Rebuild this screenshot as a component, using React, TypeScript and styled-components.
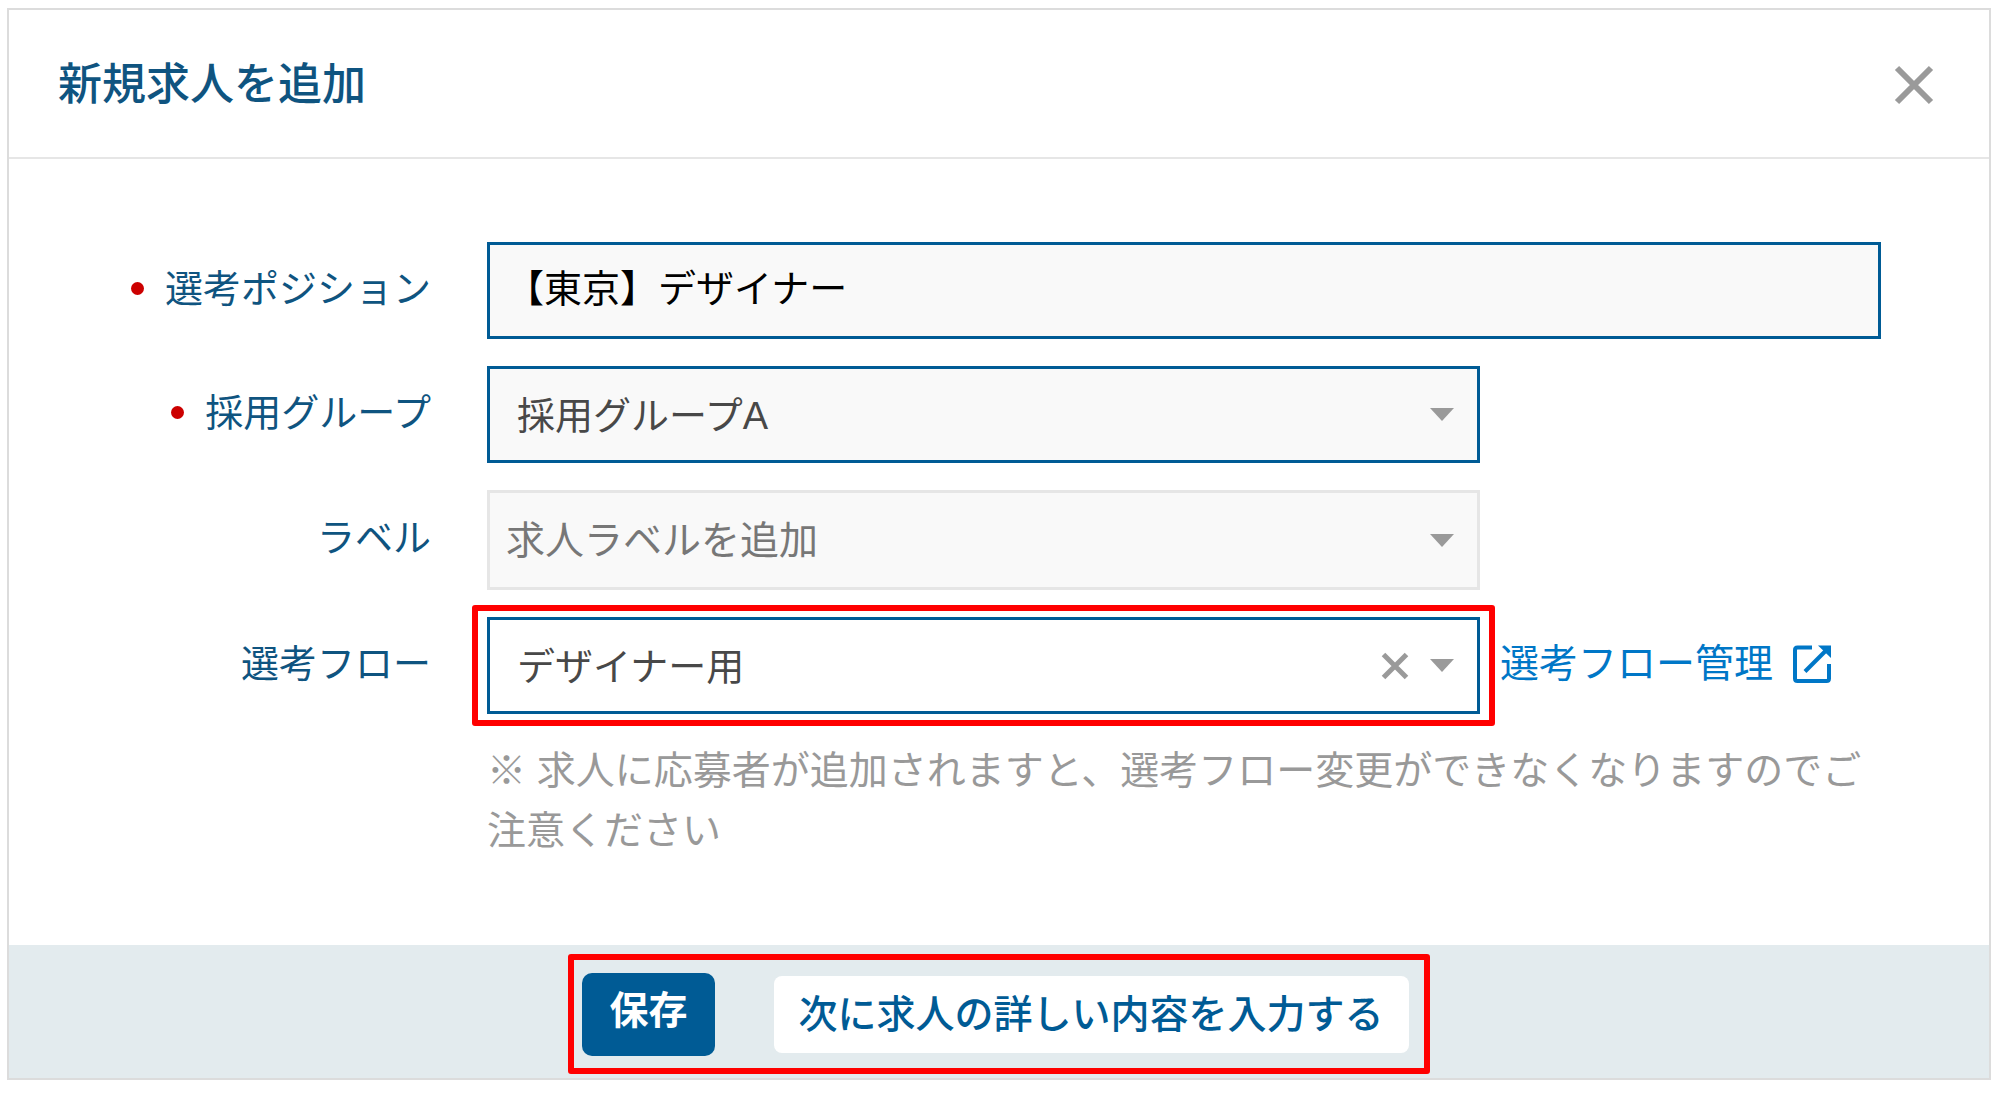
import React from "react";
import styled, { createGlobalStyle, css } from "styled-components";

const color = {
  title: "#0f5480",
  primary: "#005b95",
  link: "#0077c7",
  line: "#dcdcdc",
  softLine: "#e6e6e6",
  field: "#f9f9f9",
  icon: "#9a9a9a",
  required: "#cc0000",
  callout: "#ff0000",
};

const GlobalStyle = createGlobalStyle`
  *, *::before, *::after { box-sizing: border-box; }
  body {
    margin: 0;
    background: #fff;
    font-family: "Liberation Sans", "Noto Sans CJK JP", sans-serif;
    font-size: 39px;
    line-height: 60px;
  }
  button, input, select { font: inherit; margin: 0; }
`;

const Page = styled.div`
  padding: 8px 9px 14px 7px;
`;

const Dialog = styled.form`
  display: flex;
  flex-direction: column;
  border: 2px solid ${color.line};
  background: #fff;
`;

const Header = styled.header`
  display: flex;
  align-items: center;
  justify-content: space-between;
  padding: 45px 55px 42px 49px;
  border-bottom: 2px solid ${color.softLine};
`;

const Title = styled.h1`
  margin: 0;
  color: ${color.title};
  font-size: 44px;
  font-weight: 500;
  line-height: 60px;
`;

const IconButton = styled.button`
  display: flex;
  padding: 0;
  border: 0;
  background: none;
  color: ${color.icon};
  cursor: pointer;
`;

const Body = styled.div`
  display: flex;
  flex-direction: column;
  gap: 27px;
  padding: 83px 108px 84px 0;
`;

const Row = styled.div`
  display: grid;
  grid-template-columns: 422px minmax(0, 1fr);
  column-gap: 56px;
  align-items: center;
`;

const Label = styled.label`
  display: flex;
  align-items: center;
  justify-content: flex-end;
  gap: 21px;
  padding-bottom: 4px;
  color: ${color.title};
  font-size: 38px;
  white-space: nowrap;
`;

const RequiredDot = styled.span`
  width: 13px;
  height: 13px;
  border-radius: 50%;
  background: ${color.required};
`;

const fieldBox = css`
  display: block;
  width: 100%;
  height: 97px;
  border: 3px solid ${color.primary};
  border-radius: 0;
  background: ${color.field};
  font-size: 38px;
  outline: none;
`;

const TextInput = styled.input`
  ${fieldBox}
  padding: 0 16px 10px;
  color: #000;
`;

const FieldLine = styled.div`
  display: flex;
  align-items: center;
  gap: 20px;
`;

const SelectWrap = styled.div`
  position: relative;
  flex: 0 1 993px;
  min-width: 0;
`;

const Select = styled.select<{ $empty?: boolean; $active?: boolean }>`
  ${fieldBox}
  appearance: none;
  padding: 2px 100px 0 27px;
  color: #484848;
  ${(p) =>
    p.$empty &&
    css`
      height: 100px;
      padding-left: 16px;
      border-color: ${color.softLine};
      color: #777;
      font-size: 39px;
    `}
  ${(p) =>
    p.$active &&
    css`
      background: #fff;
    `}
`;

const SelectIcons = styled.div`
  position: absolute;
  inset: 0 26px 0 auto;
  display: flex;
  align-items: center;
  gap: 21px;
  color: ${color.icon};
  pointer-events: none;

  button { pointer-events: auto; }
`;

const Callout = styled.span`
  position: absolute;
  inset: -12px -15px;
  border: 6px solid ${color.callout};
  border-radius: 3px;
  pointer-events: none;
`;

const FlowLink = styled.a`
  display: flex;
  align-items: center;
  gap: 20px;
  padding-bottom: 4px;
  color: ${color.link};
  text-decoration: none;
  white-space: nowrap;
`;

const Note = styled.p`
  grid-column: 2;
  margin: 0;
  color: #999;
`;

const Footer = styled.footer`
  display: flex;
  justify-content: center;
  padding: 9px 0 4px;
  background: #e3ebee;
`;

const Actions = styled.div`
  display: flex;
  align-items: center;
  gap: 59px;
  padding: 13px 15px 12px 8px;
  border: 6px solid ${color.callout};
  border-radius: 3px;
`;

const Button = styled.button<{ $primary?: boolean }>`
  padding: 9px 25px 8px;
  border: 0;
  border-radius: 8px;
  background: ${(p) => (p.$primary ? color.primary : "#fff")};
  color: ${(p) => (p.$primary ? "#fff" : color.primary)};
  font-weight: 500;
  white-space: nowrap;
  cursor: pointer;
  ${(p) =>
    p.$primary &&
    css`
      padding: 8px 27px 15px;
      border-radius: 10px;
      font-weight: 700;
    `}
`;

function Cross({ size, stroke }: { size: number; stroke: number }) {
  const a = stroke / 2;
  const b = size - a;
  return (
    <svg width={size} height={size} viewBox={`0 0 ${size} ${size}`} aria-hidden="true">
      <path d={`M${a} ${a}L${b} ${b}M${b} ${a}L${a} ${b}`} stroke="currentColor" strokeWidth={stroke} />
    </svg>
  );
}

function Caret() {
  return (
    <svg width="24" height="13" viewBox="0 0 24 13" aria-hidden="true">
      <path d="M0 0h24L12 13z" fill="currentColor" />
    </svg>
  );
}

function OpenIcon() {
  return (
    <svg width="38" height="38" viewBox="0 0 38 38" fill="none" stroke="currentColor" strokeWidth="4" aria-hidden="true">
      <path d="M19 2.5H4.500Q2 2.500 2 5V33.500Q2 36 4.500 36H33.500Q36 36 36 33.500V19" />
      <path d="M12 26.500L34 4.500" />
      <path d="M25 .5H38V13z" fill="currentColor" stroke="none" />
    </svg>
  );
}

export default function App() {
  return (
    <>
      <GlobalStyle />
      <Page>
        <Dialog role="dialog" aria-labelledby="dialog-title" onSubmit={(e) => e.preventDefault()}>
          <Header>
            <Title id="dialog-title">新規求人を追加</Title>
            <IconButton type="button" aria-label="閉じる">
              <Cross size={40} stroke={6} />
            </IconButton>
          </Header>

          <Body>
            <Row>
              <Label htmlFor="position">
                <RequiredDot />
                選考ポジション
              </Label>
              <TextInput id="position" type="text" defaultValue="【東京】デザイナー" />
            </Row>

            <Row>
              <Label htmlFor="group">
                <RequiredDot />
                採用グループ
              </Label>
              <FieldLine>
                <SelectWrap>
                  <Select id="group">
                    <option>採用グループA</option>
                  </Select>
                  <SelectIcons>
                    <Caret />
                  </SelectIcons>
                </SelectWrap>
              </FieldLine>
            </Row>

            <Row>
              <Label htmlFor="tag">ラベル</Label>
              <FieldLine>
                <SelectWrap>
                  <Select id="tag" $empty>
                    <option>求人ラベルを追加</option>
                  </Select>
                  <SelectIcons>
                    <Caret />
                  </SelectIcons>
                </SelectWrap>
              </FieldLine>
            </Row>

            <Row>
              <Label htmlFor="flow">選考フロー</Label>
              <FieldLine>
                <SelectWrap>
                  <Select id="flow" $active>
                    <option>デザイナー用</option>
                  </Select>
                  <SelectIcons>
                    <IconButton type="button" aria-label="クリア">
                      <Cross size={28} stroke={5} />
                    </IconButton>
                    <Caret />
                  </SelectIcons>
                  <Callout />
                </SelectWrap>
                <FlowLink href="#flow">
                  選考フロー管理
                  <OpenIcon />
                </FlowLink>
              </FieldLine>
            </Row>

            <Row>
              <Note>
                ※ 求人に応募者が追加されますと、選考フロー変更ができなくなりますのでご注意ください
              </Note>
            </Row>
          </Body>

          <Footer>
            <Actions>
              <Button type="submit" $primary>
                保存
              </Button>
              <Button type="button">次に求人の詳しい内容を入力する</Button>
            </Actions>
          </Footer>
        </Dialog>
      </Page>
    </>
  );
}
